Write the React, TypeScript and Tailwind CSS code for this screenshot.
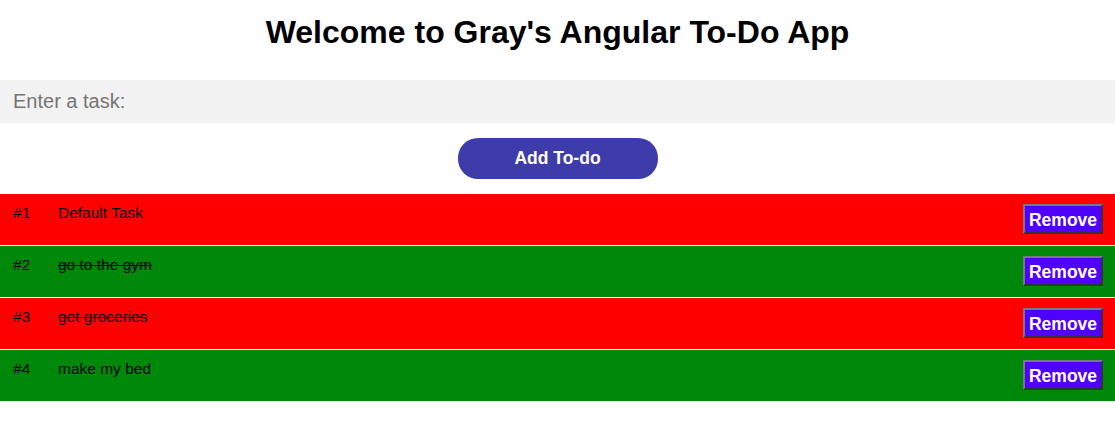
import React from "react";

const todos = [
  { id: 1, text: "Default Task", done: false, bg: "bg-[#ff0000]" },
  { id: 2, text: "go to the gym", done: true, bg: "bg-[#00880a]" },
  { id: 3, text: "get groceries", done: true, bg: "bg-[#ff0000]" },
  { id: 4, text: "make my bed", done: false, bg: "bg-[#00880a]" },
];

export default function App() {
  return (
    <div className="w-[1115px] min-h-[425px] bg-white font-['Liberation_Sans',Arial,sans-serif] text-black">
      <h1 className="pt-[14px] text-center text-[32px] font-bold leading-[37px]">
        Welcome to Gray's Angular To-Do App
      </h1>
      <input
        className="mt-[29px] block h-[43px] w-full bg-[#f2f2f2] pl-[13px] text-[20px] outline-none placeholder:text-[#757575]"
        placeholder="Enter a task:"
      />
      <div className="mt-[15px] flex justify-center">
        <button className="h-[41px] w-[200px] rounded-[20px] bg-[#3e3caa] text-[17.5px] font-bold text-white">
          Add To-do
        </button>
      </div>
      <ul className="mt-[15px] flex flex-col gap-[1px]">
        {todos.map((t) => (
          <li
            key={t.id}
            className={`${t.bg} flex h-[51px] items-start py-[10px] pl-[13px] pr-[12px] text-[15.5px]`}
          >
            <span className="w-[45px] leading-[17px]">#{t.id}</span>
            <span className={`flex-1 leading-[17px] ${t.done ? "line-through" : ""}`}>
              {t.text}
            </span>
            <button className="flex h-[30px] w-[80px] items-center justify-center border-2 border-t-[#7a7a7a] border-l-[#7a7a7a] border-b-[#333333] border-r-[#333333] bg-[#5000ff] pt-[2px] text-[17.5px] font-bold text-white">
              Remove
            </button>
          </li>
        ))}
      </ul>
    </div>
  );
}
